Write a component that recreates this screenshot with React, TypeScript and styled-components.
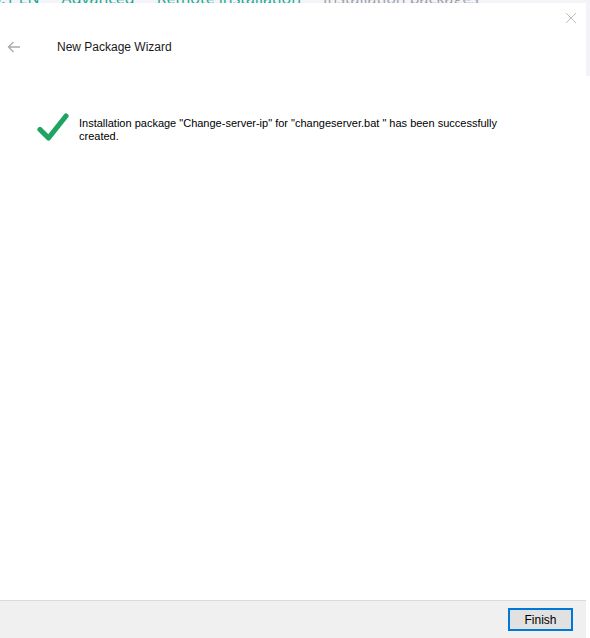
import React from 'react';
import styled, { createGlobalStyle } from 'styled-components';

const GlobalStyle = createGlobalStyle`
  html, body {
    margin: 0;
    padding: 0;
    background: #ffffff;
  }
  body {
    font-family: "Liberation Sans", Arial, sans-serif;
  }
`;

function BackArrow() {
  return (
    <svg width='14' height='12' viewBox='0 0 14 12'>
      <path d='M13 6H1.5M6.5 1L1.5 6l5 5' fill='none' stroke='#ababab' strokeWidth='1.3' />
    </svg>
  );
}

function CloseIcon() {
  return (
    <svg width='12' height='12' viewBox='0 0 12 12'>
      <path d='M1 1l10 10M11 1L1 11' fill='none' stroke='#bdbdbd' strokeWidth='1' />
    </svg>
  );
}

function CheckIcon() {
  return (
    <svg width='32' height='30' viewBox='0 0 32 30'>
      <path d='M3 17.5l8.5 8.5L29 4' fill='none' stroke='#1ea463' strokeWidth='5.2' strokeLinecap='round' strokeLinejoin='round' />
    </svg>
  );
}

function App() {
  return (
    <>
      <GlobalStyle />
      <PageWrapper>
        <BackgroundTabs>
          <TabText>3.1 EN</TabText>
          <TabText>Advanced</TabText>
          <TabText>Remote installation</TabText>
          <TabText muted>Installation packages</TabText>
        </BackgroundTabs>
        <Body>
          <DialogWrapper>
            <CloseRow>
              <CloseButton><CloseIcon /></CloseButton>
            </CloseRow>
            <HeaderWrapper>
              <BackButton><BackArrow /></BackButton>
              <TitleWrapper>New Package Wizard</TitleWrapper>
            </HeaderWrapper>
            <ContentWrapper>
              <ResultRow>
                <IconWrapper><CheckIcon /></IconWrapper>
                <MessageWrapper>
                  Installation package "Change-server-ip" for "changeserver.bat " has been successfully created.
                </MessageWrapper>
              </ResultRow>
            </ContentWrapper>
            <FooterWrapper>
              <FinishButton>Finish</FinishButton>
            </FooterWrapper>
          </DialogWrapper>
          <SideStrip />
        </Body>
      </PageWrapper>
    </>
  );
}

const PageWrapper = styled.div`
  width: 590px;
  height: 638px;
  display: flex;
  flex-direction: column;
  overflow: hidden;
`

const BackgroundTabs = styled.div`
  height: 3px;
  flex-shrink: 0;
  display: flex;
  align-items: flex-end;
  gap: 22px;
  margin-left: -8px;
  overflow: hidden;
  background: #f3f3f8;
`

const TabText = styled.span<{ muted?: boolean }>`
  font-family: "Open Sans", "Liberation Sans", sans-serif;
  font-size: 16px;
  line-height: 10px;
  white-space: nowrap;
  color: ${(p) => (p.muted ? '#9aa0a6' : '#10a88e')};
`

const Body = styled.div`
  flex: 1;
  display: flex;
`

const DialogWrapper = styled.div`
  width: 586px;
  display: flex;
  flex-direction: column;
  background: #ffffff;
`

const SideStrip = styled.div`
  width: 4px;
  height: 73px;
  background: #f3f3f8;
`

const CloseRow = styled.div`
  height: 25px;
  display: flex;
  justify-content: flex-end;
  align-items: flex-start;
  padding: 7px 9px 0 0;
  box-sizing: border-box;
`

const CloseButton = styled.div`
  width: 12px;
  height: 12px;
`

const HeaderWrapper = styled.div`
  height: 38px;
  display: flex;
  align-items: center;
  padding-left: 7px;
  box-sizing: border-box;
`

const BackButton = styled.div`
  width: 50px;
  display: flex;
  align-items: center;
`

const TitleWrapper = styled.div`
  font-size: 12px;
  color: #1a1a1a;
`

const ContentWrapper = styled.div`
  flex: 1;
  padding: 48px 70px 0 37px;
`

const ResultRow = styled.div`
  display: flex;
  align-items: flex-start;
  gap: 10px;
`

const IconWrapper = styled.div`
  flex-shrink: 0;
  margin-top: -2px;
`

const MessageWrapper = styled.div`
  font-size: 11px;
  line-height: 13px;
  padding-top: 3px;
  color: #000000;
`

const FooterWrapper = styled.div`
  height: 37px;
  flex-shrink: 0;
  display: flex;
  justify-content: flex-end;
  align-items: center;
  padding-right: 13px;
  background: #f0f0f0;
  border-top: 1px solid #dadada;
`

const FinishButton = styled.button`
  width: 65px;
  height: 23px;
  padding: 0;
  background: #e1e1e1;
  border: 2px solid #0078d7;
  font-family: "Liberation Sans", Arial, sans-serif;
  font-size: 12px;
  color: #000000;
`

export default App;
